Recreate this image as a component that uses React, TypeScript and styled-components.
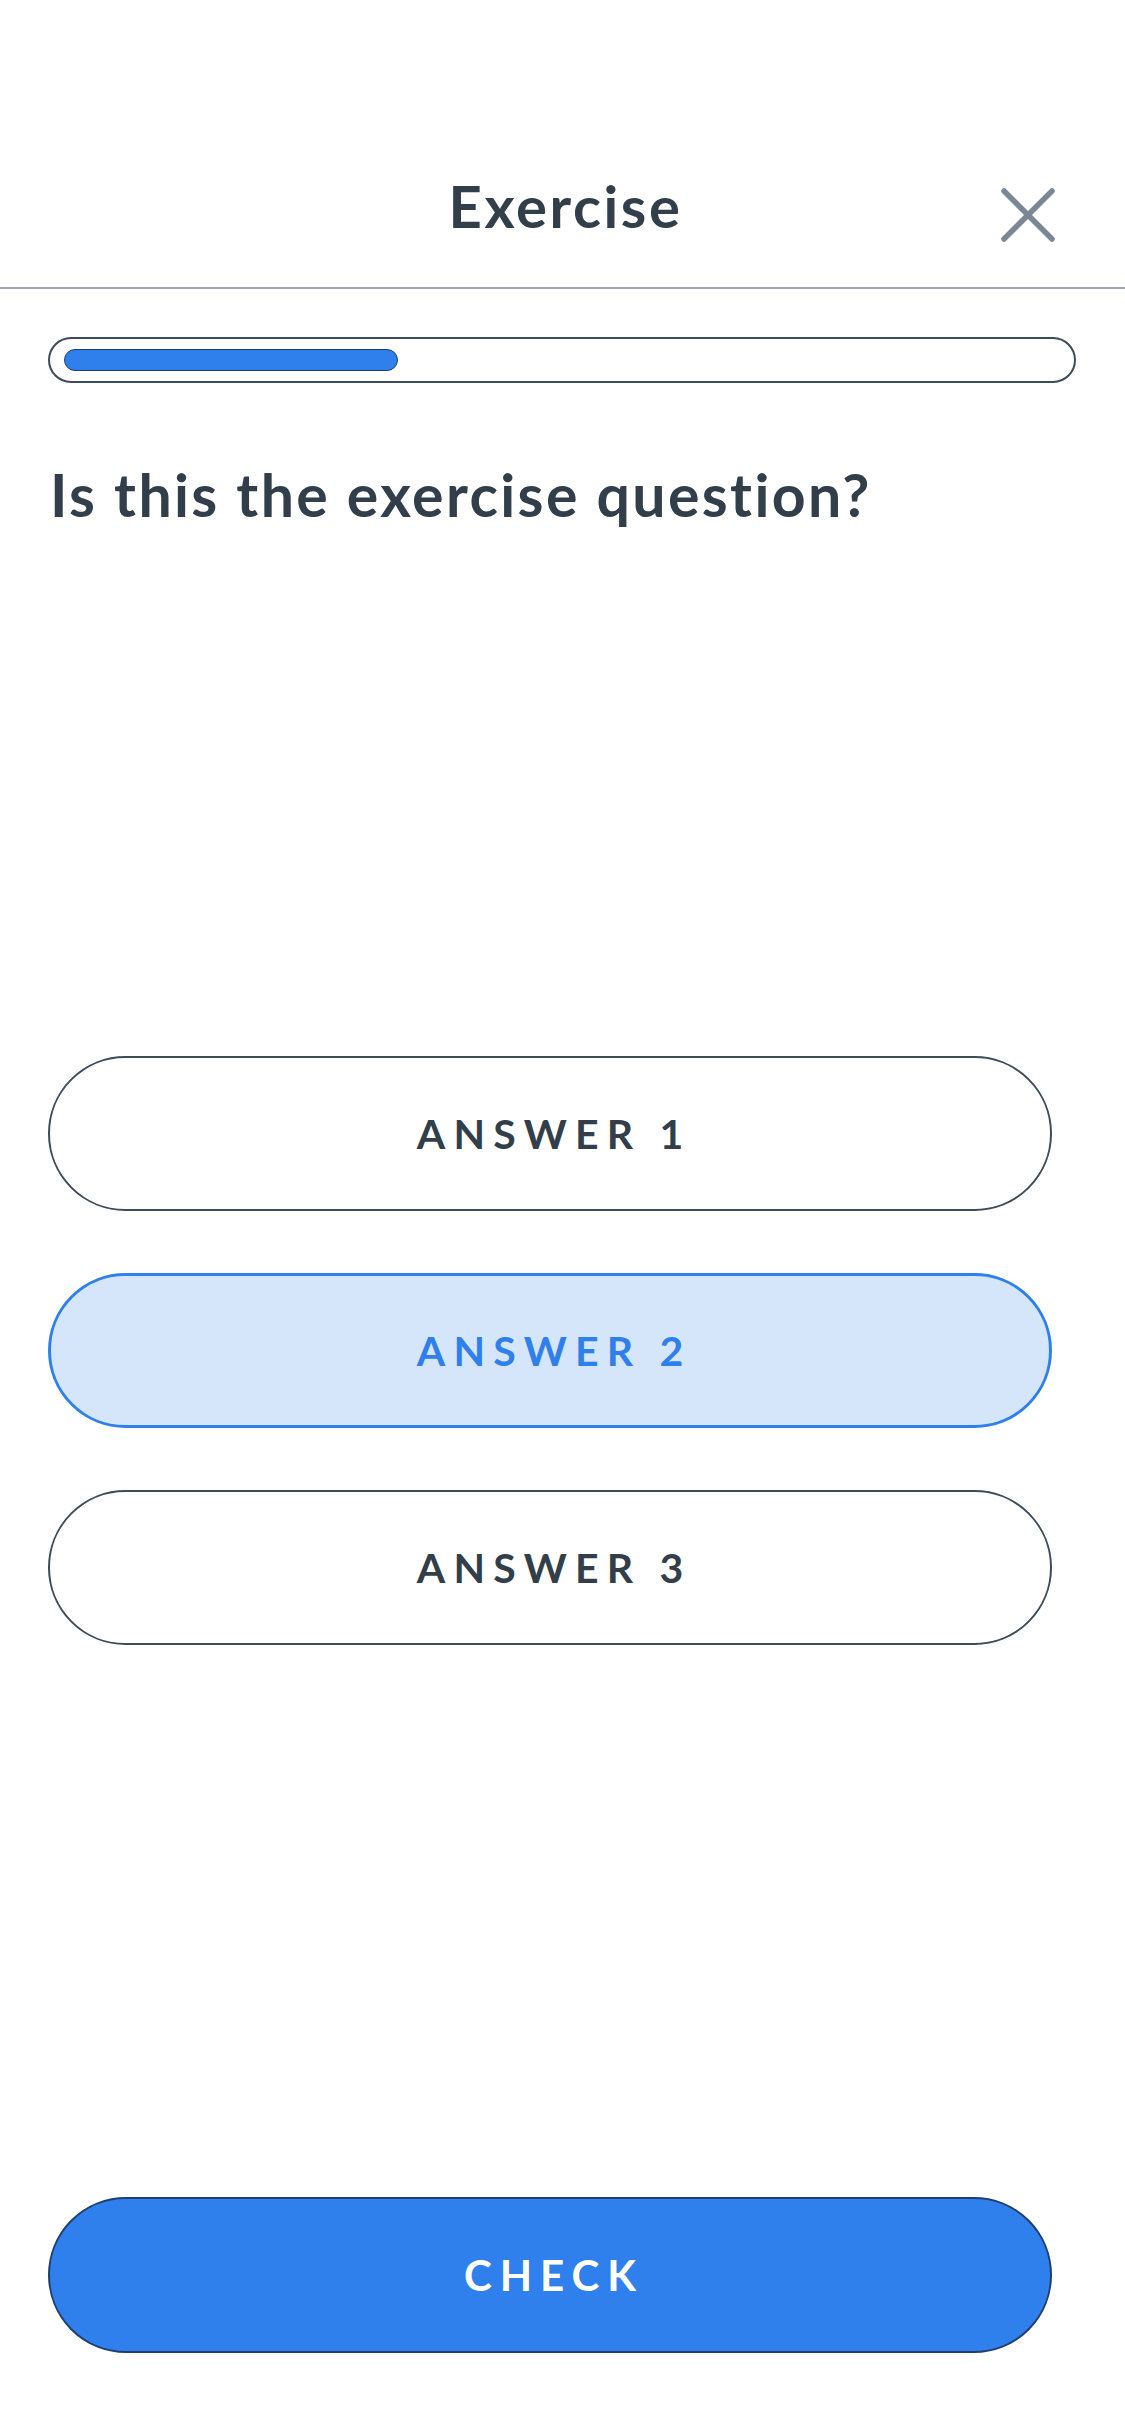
import React, { useState } from "react";
import styled, { createGlobalStyle } from "styled-components";

const GlobalStyle = createGlobalStyle`
    html, body {
        margin: 0;
        padding: 0;
        background: #ffffff;
    }
    * {
        box-sizing: border-box;
    }
`;

const answers = ["ANSWER 1", "ANSWER 2", "ANSWER 3"];
const progress = 33.5;

export default function App() {
    const [selected, setSelected] = useState(1);

    return (
        <>
            <GlobalStyle />
            <Screen>
                <Header>
                    <span />
                    <Title>Exercise</Title>
                    <CloseButton aria-label="close">
                        <svg width="56" height="56" viewBox="0 0 56 56" fill="none">
                            <path d="M4 4 L52 52 M52 4 L4 52" stroke="#7b8794" strokeWidth="5.5" strokeLinecap="round" />
                        </svg>
                    </CloseButton>
                </Header>
                <Content>
                    <ProgressTrack>
                        <ProgressFill style={{ width: `${progress}%` }} />
                    </ProgressTrack>
                    <Question>Is this the exercise question?</Question>
                    <AnswerList>
                        {answers.map((a, i) => (
                            <AnswerButton key={a} $active={i === selected} onClick={() => setSelected(i)}>
                                {a}
                            </AnswerButton>
                        ))}
                    </AnswerList>
                    <CheckButton>CHECK</CheckButton>
                </Content>
            </Screen>
        </>
    );
}

const Screen = styled.div`
    width: 1125px;
    min-height: 2436px;
    display: flex;
    flex-direction: column;
    font-family: Lato, "Open Sans", sans-serif;
    color: #323f4b;
`;

const Header = styled.header`
    height: 289px;
    padding: 124px 69px 0 69px;
    display: grid;
    grid-template-columns: 1fr auto 1fr;
    align-items: center;
    border-bottom: 2px solid #9aa5b1;
`;

const Title = styled.h1`
    margin: 0 0 0 6px;
    font-size: 58px;
    font-weight: 700;
    line-height: 70px;
    letter-spacing: 0.045em;
    color: #323f4b;
`;

const CloseButton = styled.button`
    justify-self: end;
    margin-top: 18px;
    width: 56px;
    height: 56px;
    padding: 0;
    border: none;
    background: none;
    display: flex;
    cursor: pointer;
`;

const Content = styled.main`
    flex: 1;
    display: flex;
    flex-direction: column;
    padding: 48px 49px 83px 48px;
`;

const ProgressTrack = styled.div`
    height: 46px;
    border: 2px solid #3e4c59;
    border-radius: 23px;
    padding: 10px 14px;
    display: flex;
`;

const ProgressFill = styled.div`
    height: 100%;
    background: #2f80ed;
    border: 1.5px solid #1f3f6e;
    border-radius: 12px;
`;

const Question = styled.h2`
    margin: 76px 0 0 2px;
    font-size: 59px;
    font-weight: 700;
    line-height: 72px;
    letter-spacing: 0.04em;
    color: #323f4b;
`;

const AnswerList = styled.div`
    margin-top: 525px;
    width: 1004px;
    display: flex;
    flex-direction: column;
    gap: 62px;
`;

const AnswerButton = styled.button<{ $active: boolean }>`
    height: 155px;
    width: 100%;
    border-radius: 78px;
    border: ${p => (p.$active ? "3px solid #2f80ed" : "2px solid #3e4c59")};
    background: ${p => (p.$active ? "#d5e6fb" : "#ffffff")};
    color: ${p => (p.$active ? "#2f80ed" : "#323f4b")};
    font-family: Lato, "Open Sans", sans-serif;
    font-size: 41px;
    font-weight: 700;
    letter-spacing: 0.2em;
    text-indent: 0.2em;
    cursor: pointer;
`;

const CheckButton = styled.button`
    margin-top: auto;
    height: 156px;
    width: 1004px;
    border-radius: 78px;
    border: 2px solid #1f3f6e;
    background: #2f80ed;
    color: #ffffff;
    font-family: Lato, "Open Sans", sans-serif;
    font-size: 42px;
    font-weight: 700;
    letter-spacing: 0.19em;
    text-indent: 0.19em;
    cursor: pointer;
`;
